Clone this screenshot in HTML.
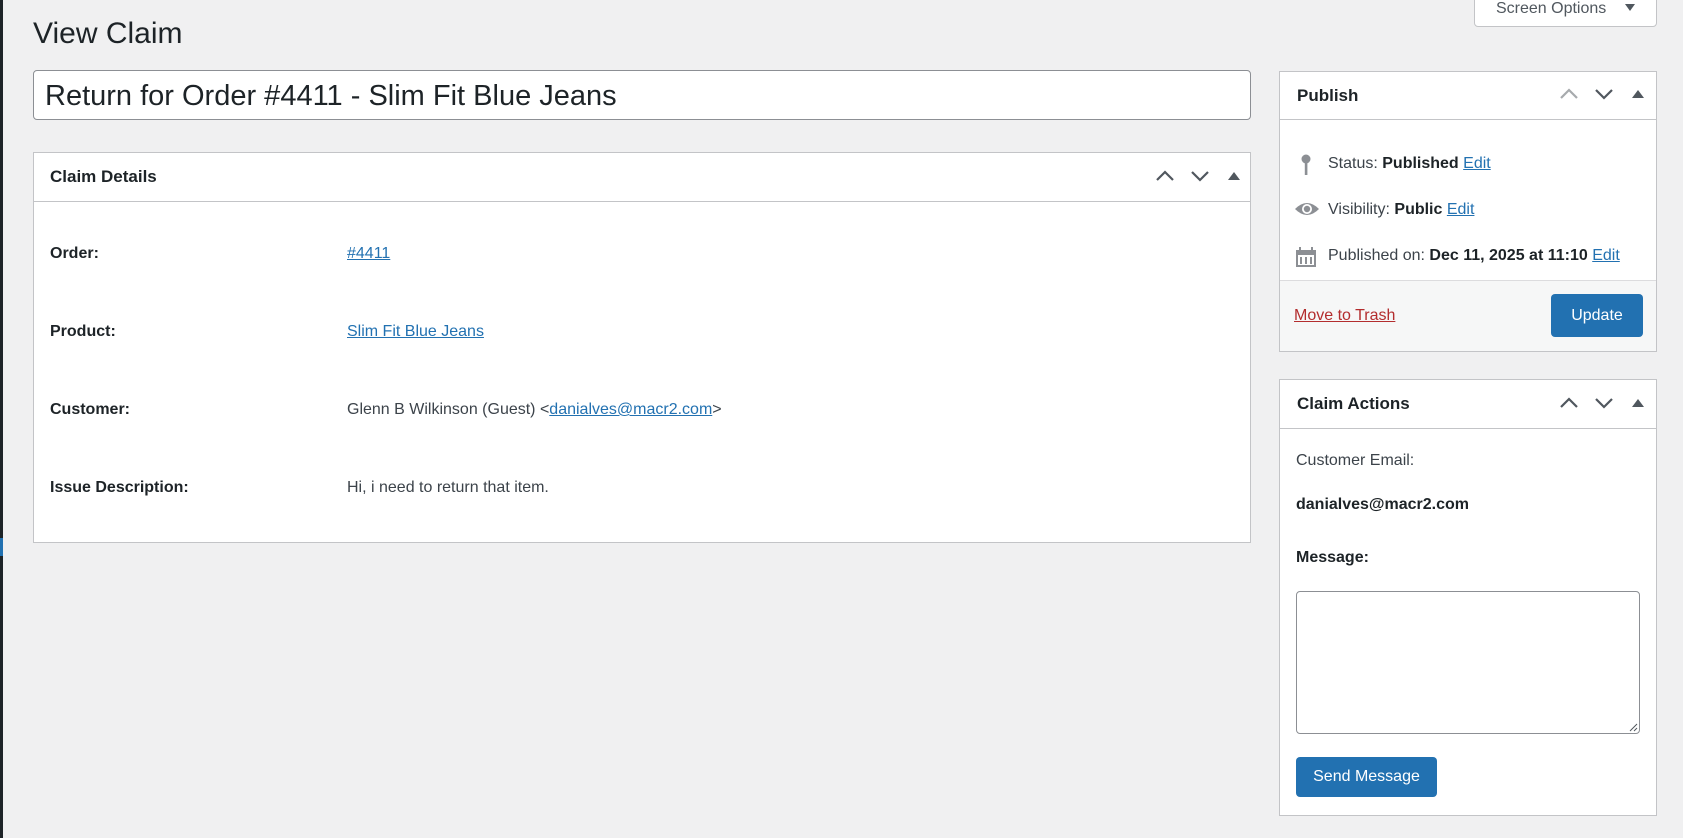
<!DOCTYPE html>
<html><head><meta charset="utf-8"><style>
*{box-sizing:border-box;margin:0;padding:0}
body{width:1683px;height:838px;background:#f0f0f1;font-family:"Liberation Sans",sans-serif;color:#3c434a;position:relative;overflow:hidden;font-size:16px}
.abs{position:absolute}
.lbar{left:0;top:0;width:3px;height:838px;background:#1d2327}
.box{position:absolute;background:#fff;border:1px solid #c3c4c7}
.hd{position:absolute;left:0;right:0;top:0;border-bottom:1px solid #c3c4c7}
.ht{position:absolute;font-weight:bold;font-size:17px;color:#1d2327}
a{color:#2271b1;text-decoration:underline}
.lab{position:absolute;left:16px;font-weight:bold;color:#1d2327;font-size:16px;line-height:20px}
.val{position:absolute;left:313px;font-size:16px;line-height:20px}
.row{position:absolute;font-size:16px;line-height:20px;white-space:nowrap}
.btn{position:absolute;background:#2271b1;color:#fff;border-radius:4px;font-size:16px;text-align:center}
</style></head><body>
<div class="abs lbar"></div>
<div class="abs" style="left:0;top:538px;width:3px;height:18px;background:#2271b1"></div>

<div class="abs" style="left:1474px;top:-6px;width:183px;height:33px;background:#fff;border:1px solid #c3c4c7;border-radius:0 0 4px 4px;font-size:16px;color:#50575e">
<span class="abs" style="left:21px;top:5px">Screen Options</span>
<svg class="abs" style="left:149px;top:8px" width="12" height="9"><path d="M1 1h10L6 8z" fill="#50575e"/></svg>
</div>

<div class="abs" style="left:33px;top:16px;font-size:30px;color:#1d2327;line-height:36px">View Claim</div>

<div class="abs" style="left:33px;top:70px;width:1218px;height:50px;background:#fff;border:1px solid #8c8f94;border-radius:4px">
<span class="abs" style="left:11px;top:10px;font-size:29px;color:#1d2327;line-height:30px;white-space:nowrap">Return for Order #4411 - Slim Fit Blue Jeans</span>
</div>

<!-- Claim details -->
<div class="box" style="left:33px;top:152px;width:1218px;height:391px">
 <div class="hd" style="height:49px">
  <span class="ht" style="left:16px;top:14px">Claim Details</span>
  <svg class="abs" style="left:1121px;top:17px" width="20" height="12"><path d="M2 10l8-8 8 8" fill="none" stroke="#50575e" stroke-width="2.2"/></svg>
  <svg class="abs" style="left:1156px;top:17px" width="20" height="12"><path d="M2 2l8 8 8-8" fill="none" stroke="#50575e" stroke-width="2.2"/></svg>
  <svg class="abs" style="left:1194px;top:18px" width="12" height="9"><path d="M0 9L6 1l6 8z" fill="#50575e"/></svg>
 </div>
 <span class="lab" style="top:91px">Order:</span><span class="val" style="top:91px"><a>#4411</a></span>
 <span class="lab" style="top:169px">Product:</span><span class="val" style="top:169px"><a>Slim Fit Blue Jeans</a></span>
 <span class="lab" style="top:247px">Customer:</span><span class="val" style="top:247px">Glenn B Wilkinson (Guest) &lt;<a>danialves@macr2.com</a>&gt;</span>
 <span class="lab" style="top:325px">Issue Description:</span><span class="val" style="top:325px">Hi, i need to return that item.</span>
</div>

<!-- Publish -->
<div class="box" style="left:1279px;top:71px;width:378px;height:281px">
 <div class="hd" style="height:48px">
  <span class="ht" style="left:17px;top:14px">Publish</span>
  <svg class="abs" style="left:279px;top:16px" width="20" height="12"><path d="M2 10l8-8 8 8" fill="none" stroke="#a7aaad" stroke-width="2.2"/></svg>
  <svg class="abs" style="left:314px;top:16px" width="20" height="12"><path d="M2 2l8 8 8-8" fill="none" stroke="#50575e" stroke-width="2.2"/></svg>
  <svg class="abs" style="left:352px;top:17px" width="12" height="9"><path d="M0 9L6 1l6 8z" fill="#50575e"/></svg>
 </div>
 <svg class="abs" style="left:19px;top:82px" width="14" height="22"><circle cx="7" cy="5" r="4.5" fill="#8c8f94"/><rect x="5.8" y="7" width="2.6" height="14" fill="#8c8f94"/></svg>
 <span class="row" style="left:48px;top:82px">Status: <b style="color:#1d2327">Published</b> <a>Edit</a></span>
 <svg class="abs" style="left:14px;top:129px" width="26" height="16"><path d="M1 8Q13 -4 25 8Q13 20 1 8z" fill="#8c8f94"/><circle cx="13" cy="8" r="5" fill="#fff"/><circle cx="13" cy="8" r="3.2" fill="#8c8f94"/></svg>
 <span class="row" style="left:48px;top:128px">Visibility: <b style="color:#1d2327">Public</b> <a>Edit</a></span>
 <svg class="abs" style="left:15px;top:174px" width="22" height="22"><rect x="1" y="4" width="20" height="17" fill="#8c8f94"/><rect x="3" y="9" width="16" height="10" fill="#fff"/><rect x="5" y="11" width="2" height="7" fill="#8c8f94"/><rect x="10" y="11" width="2" height="7" fill="#8c8f94"/><rect x="15" y="11" width="2" height="7" fill="#8c8f94"/><rect x="4" y="1" width="2" height="5" fill="#8c8f94"/><rect x="16" y="1" width="2" height="5" fill="#8c8f94"/></svg>
 <span class="row" style="left:48px;top:174px">Published on: <b style="color:#1d2327">Dec 11, 2025 at 11:10</b> <a>Edit</a></span>
 <div class="abs" style="left:0;right:0;top:208px;bottom:0;background:#f6f7f7;border-top:1px solid #dcdcde"></div>
 <span class="row" style="left:14px;top:234px"><a style="color:#b32d2e">Move to Trash</a></span>
 <div class="btn" style="left:271px;top:222px;width:92px;height:43px;line-height:43px">Update</div>
</div>

<!-- Claim actions -->
<div class="box" style="left:1279px;top:379px;width:378px;height:437px">
 <div class="hd" style="height:49px">
  <span class="ht" style="left:17px;top:14px">Claim Actions</span>
  <svg class="abs" style="left:279px;top:17px" width="20" height="12"><path d="M2 10l8-8 8 8" fill="none" stroke="#50575e" stroke-width="2.2"/></svg>
  <svg class="abs" style="left:314px;top:17px" width="20" height="12"><path d="M2 2l8 8 8-8" fill="none" stroke="#50575e" stroke-width="2.2"/></svg>
  <svg class="abs" style="left:352px;top:18px" width="12" height="9"><path d="M0 9L6 1l6 8z" fill="#50575e"/></svg>
 </div>
 <span class="row" style="left:16px;top:71px">Customer Email:</span>
 <span class="row" style="left:16px;top:115px;font-weight:bold;color:#1d2327">danialves@macr2.com</span>
 <span class="row" style="left:16px;top:168px;font-weight:bold;color:#1d2327">Message:</span>
 <div class="abs" style="left:16px;top:211px;width:344px;height:143px;border:1px solid #8c8f94;border-radius:4px;background:#fff">
  <svg class="abs" style="right:1px;bottom:1px" width="10" height="10"><path d="M9 2L2 9M9 6L6 9" stroke="#50575e" stroke-width="1"/></svg>
 </div>
 <div class="btn" style="left:16px;top:377px;width:141px;height:40px;line-height:40px">Send Message</div>
</div>
</body></html>
